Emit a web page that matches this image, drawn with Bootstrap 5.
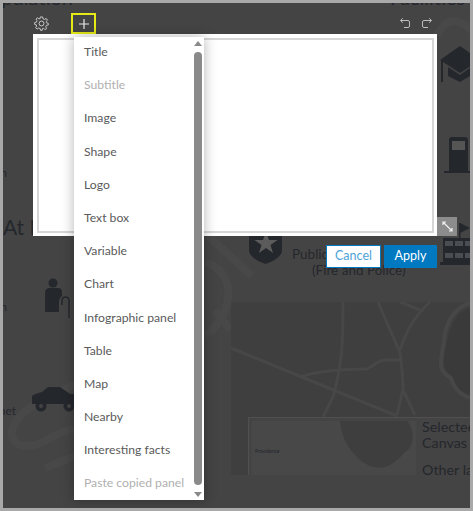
<!DOCTYPE html>
<html>
<head>
  <title>Infographic panel editor</title>
  <link rel="stylesheet" href="https://cdn.jsdelivr.net/npm/bootstrap@5.3.0/dist/css/bootstrap.min.css">
  <style>
    html, body { height: 100%; }
    body { background: #a9a9a9; font-family: Lato, "Liberation Sans", sans-serif; overflow: hidden; }
    .stage { position: relative; width: 473px; height: 511px; padding: 3px; }
    .dim { position: relative; height: 505px; background: #444; overflow: hidden; }
    .backdrop { position: absolute; left: -3px; top: -3px; width: 473px; height: 511px; }
    .backdrop text { font-family: Lato, "Liberation Sans", sans-serif; fill: #24272c; }
    .editor { position: relative; }
    .tool-row { height: 31px; padding-left: 30px; padding-right: 38px; }
    .tool-btn { width: 25px; height: 21px; margin-top: 10px; }
    .tool-gear { margin-left: -4px; margin-right: 17px; }
    .tool-add { border: 2px solid #e6ea16; }
    .tool-undo { margin-left: auto; gap: 12px; margin-top: 15px; }
    .panel-wrap { margin-left: 30px; width: 404px; height: 202px; background: #fff; padding: 4px 3px 3px 4px; position: relative; }
    .panel-box { height: 100%; border: 2px solid #d6d6d6; background: #fff; }
    .resize-tab { position: absolute; left: 404px; bottom: 0; width: 20px; height: 19px; background: #8c8c8c; }
    .btn-row { width: 404px; margin-left: 30px; margin-top: 9px; gap: 3px; }
    .btn-cancel, .btn-apply { height: 23px; font-size: 12.5px; line-height: 1; border-radius: 0; padding: 0; border: 1px solid #0079c1; }
    .btn-cancel { width: 55px; background: #fff; color: #4ea3d9; }
    .btn-apply { width: 53px; background: #0079c1; color: #fff; }
    .add-menu { position: absolute; left: 71px; top: 34px; width: 130px; height: 463px; background: #fff; box-shadow: 0 0 12px rgba(0,0,0,.3); }
    .add-menu ul { margin: -2px 0 0; padding: 0; list-style: none; }
    .add-menu li { height: 33.2px; line-height: 33.2px; padding-left: 10px; font-size: 12.2px; color: #5a5a5a; white-space: nowrap; }
    .add-menu li.off { color: #b0b0b0; }
    .menu-scroll { position: absolute; left: 120px; top: 0; width: 8px; height: 100%; }
    .scroll-thumb { position: absolute; top: 15px; bottom: 15px; left: 0; width: 8px; background: #8a8a8a; border-radius: 4px; }
    .scroll-up, .scroll-down { position: absolute; left: 0; width: 0; height: 0; border-left: 4px solid transparent; border-right: 4px solid transparent; }
    .scroll-up { top: 4px; border-bottom: 5px solid #8a8a8a; }
    .scroll-down { bottom: 3px; border-top: 5px solid #8a8a8a; }
  </style>
</head>
<body>
  <div class="stage">
    <div class="dim">
      <svg class="backdrop" viewBox="0 0 473 511" aria-hidden="true">
        <g fill="none" stroke="#484848" stroke-width="8">
          <path d="M437 36 C445 17 460 17 473 32"/>
          <path d="M208 236 L252 276"/>
          <path d="M205 262 C222 268 230 280 228 298 C226 315 215 330 205 335"/>
          <path d="M215 310 L230 330"/>
          <path d="M75 385 C40 400 10 415 12 435 C14 450 35 448 50 438 C60 432 72 428 78 430"/>
          <path d="M78 455 L45 468"/>
        </g>
        <rect x="231" y="302" width="239" height="173" fill="#3f3f3f"/>
        <path d="M470 308 C452 313 449 335 445 350 C442 372 447 372 453 378 C458 392 465 394 470 396 Z" fill="#3a3a3a"/>
        <g fill="none" stroke="#474747" stroke-width="3">
          <path d="M231 348 L397 416"/>
          <path d="M343 302 C343 345 342 365 333 397 L323 417"/>
          <path d="M378 302 L400 353 C403 375 403 385 403 390 L415 415"/>
          <path d="M403 390 L397 415"/>
          <path d="M300 377 C320 370 345 369 367 369 C375 365 378 360 385 360 H400"/>
          <path d="M400 350 C405 335 412 318 430 302"/>
          <path d="M400 302 L420 310"/>
          <path d="M470 303 C455 308 448 320 445 333 C443 350 440 360 441 367 C444 375 447 375 451 378 C455 392 463 395 470 398" stroke-width="4"/>
        </g>
        <rect x="248.500" y="417.500" width="240" height="70" fill="#444" stroke="#505050"/>
        <rect x="252" y="421" width="164" height="54" fill="#484848"/>
        <path d="M340 421 H407 C416 432 414 447 405 452 C398 460 392 465 385 467 C372 470 362 462 358 458 C350 450 342 440 340 421 Z" fill="#3e3e3e"/>
        <text x="422" y="432" font-size="14.300">Selected</text>
        <text x="422" y="448" font-size="14.300">Canvas</text>
        <text x="422" y="475" font-size="14.300">Other la</text>
        <text x="255" y="453" font-size="5">Providence</text>
        <rect x="0" y="475" width="473" height="36" fill="#444"/>

        <text x="3" y="235" font-size="21">At R</text>
        <text x="73" y="5" font-size="20" text-anchor="end">Population</text>
        <text x="390" y="5" font-size="20">Facilities</text>
        <text x="7" y="177" font-size="12" text-anchor="end">n</text>
        <text x="7" y="311" font-size="12" text-anchor="end">n</text>
        <text x="16" y="415" font-size="12" text-anchor="end">Internet</text>
        <text x="292" y="259" font-size="13.500">Public Safety</text>
        <text x="312" y="275" font-size="13.500">(Fire and Police)</text>

        <g fill="#24272c">
          <path d="M440 60 L460 46 L480 60 L460 73 Z"/>
          <path d="M448 67 L460 75 L470 68 V76 L460 82 L448 76 Z"/>
          <rect x="441" y="60" width="2" height="22"/>
          <path d="M449 140 Q449 137 452 137 H465 Q468 137 468 140 V171 H449 Z"/>
          <rect x="444" y="171" width="26" height="2"/>
          <path d="M249 200 H282 V250 Q282 258 265.500 264 Q249 258 249 250 Z"/>
          <path d="M443 238 H470 V265 H440 V262 H443 Z"/>
          <rect x="459" y="223" width="1.500" height="15"/>
          <path d="M460 223 L470 228 L460 233 Z"/>
          <circle cx="53" cy="283" r="4.500"/>
          <path d="M45 293 Q45 288 50 288 H58 Q62 288 62 292 V296 Q59 298 59 302 V312 H45 Z"/>
          <path d="M32 396 Q34 394 42 392 L48 387 H60 L70 394 H76 V404 H32 Z"/>
          <circle cx="41" cy="406" r="5.500"/>
          <circle cx="69" cy="406" r="5.500"/>
        </g>
        <rect x="452" y="141" width="13" height="9" fill="#555"/>
        <path d="M266 232 l3 8 h8.500 l-7 5 2.500 8 -7 -5 -7 5 2.500 -8 -7 -5 h8.500 Z" fill="#5b5b5b"/>
        <g fill="#4a4d52">
          <rect x="445" y="241" width="8" height="5"/><rect x="455" y="241" width="8" height="5"/><rect x="465" y="241" width="5" height="5"/>
          <rect x="445" y="253" width="8" height="5"/><rect x="455" y="253" width="8" height="5"/><rect x="465" y="253" width="5" height="5"/>
        </g>
        <path d="M62 305 V301 Q62 297 65.500 297 Q69 297 69 301 M69 300 V318" fill="none" stroke="#24272c" stroke-width="1.500"/>
        <g fill="#444"><circle cx="41" cy="406" r="2"/><circle cx="69" cy="406" r="2"/></g>
      </svg>

      <div class="editor">
        <div class="tool-row d-flex align-items-start">
          <div class="tool-btn tool-gear d-flex align-items-center justify-content-center">
            <svg width="15" height="15" viewBox="0 0 16 16" fill="none" stroke="#d0d0d0" stroke-width="1">
              <circle cx="8" cy="8" r="2.600"/>
              <path d="M6.800 1 H9.200 L9.600 3 L11.200 3.700 L13 2.600 L14.400 4.500 L12.900 5.900 L13.300 7.200 L15.200 7.800 V9.600 L13.200 10 L12.500 11.500 L13.500 13.300 L11.700 14.600 L10.200 13.100 L9 13.500 L8.700 15.300 H7 L6.600 13.400 L5 12.800 L3.300 14 L1.700 12.400 L2.900 10.700 L2.400 9.400 L.7 9 V7 L2.600 6.500 L3.200 5 L2.100 3.300 L3.700 1.900 L5.300 3.100 L6.500 2.700 Z"/>
            </svg>
          </div>
          <div class="tool-btn tool-add d-flex align-items-center justify-content-center">
            <svg width="10" height="10" viewBox="0 0 10 10" stroke="#e8e8e8" stroke-width="1.200"><path d="M5 0 V10 M0 5 H10"/></svg>
          </div>
          <div class="tool-undo d-flex">
            <svg width="10" height="10" viewBox="0 0 10 10" fill="none" stroke="#bdbdbd" stroke-width="1"><path d="M.5 2.500 H8 Q9.500 2.500 9.500 4 V8 Q9.500 9.500 8 9.500 H4 M2.800 .3 L.5 2.500 L2.800 4.700"/></svg>
            <svg width="10" height="10" viewBox="0 0 10 10" fill="none" stroke="#bdbdbd" stroke-width="1"><path d="M9.500 2.500 H2 Q.5 2.500 .5 4 V8 Q.5 9.500 2 9.500 H6 M7.200 .3 L9.500 2.500 L7.200 4.700"/></svg>
          </div>
        </div>
        <div class="panel-wrap">
          <div class="panel-box"></div>
          <div class="resize-tab d-flex align-items-center justify-content-center">
            <svg width="11" height="11" viewBox="0 0 11 11" fill="none" stroke="#f0f0f0" stroke-width="1.200"><path d="M1 1 L10 10 M1 4 V1 H4 M10 7 V10 H7"/></svg>
          </div>
        </div>
        <div class="btn-row d-flex justify-content-end">
          <button type="button" class="btn btn-cancel">Cancel</button>
          <button type="button" class="btn btn-apply">Apply</button>
        </div>
      </div>

      <div class="add-menu">
        <ul>
          <li>Title</li>
          <li class="off">Subtitle</li>
          <li>Image</li>
          <li>Shape</li>
          <li>Logo</li>
          <li>Text box</li>
          <li>Variable</li>
          <li>Chart</li>
          <li>Infographic panel</li>
          <li>Table</li>
          <li>Map</li>
          <li>Nearby</li>
          <li>Interesting facts</li>
          <li class="off">Paste copied panel</li>
        </ul>
        <div class="menu-scroll">
          <div class="scroll-up"></div>
          <div class="scroll-thumb"></div>
          <div class="scroll-down"></div>
        </div>
      </div>
    </div>
  </div>
  <script src="https://cdn.jsdelivr.net/npm/bootstrap@5.3.0/dist/js/bootstrap.bundle.min.js"></script>
</body>
</html>
